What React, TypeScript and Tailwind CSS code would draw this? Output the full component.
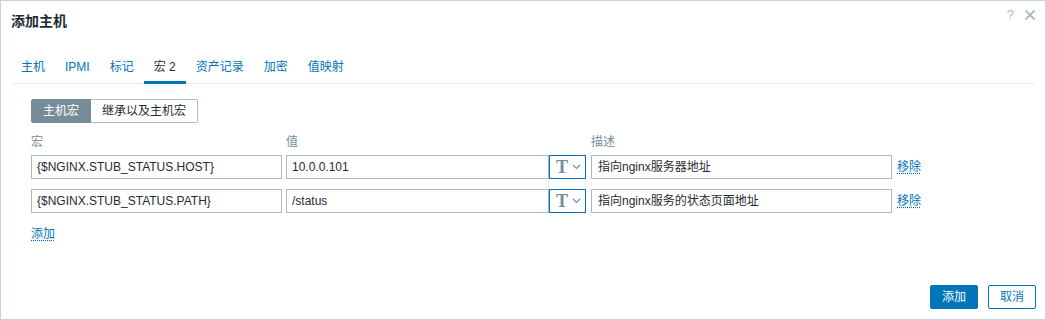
const tabs = ["主机", "IPMI", "标记", "宏 2", "资产记录", "加密", "值映射"];

const rows = [
  { macro: "{$NGINX.STUB_STATUS.HOST}", value: "10.0.0.101", desc: "指向nginx服务器地址" },
  { macro: "{$NGINX.STUB_STATUS.PATH}", value: "/status", desc: "指向nginx服务的状态页面地址" },
];

export default function App() {
  return (
    <div
      className="w-[1046px] h-[320px] bg-white border border-[#c8d1d6] flex flex-col text-[#1f2c33] text-[12px]"
      style={{ fontFamily: '"Liberation Sans", Arial, "Noto Sans CJK SC", sans-serif' }}
    >
      <div className="flex items-start justify-between pl-[10px] pr-[9px] pt-[12px]">
        <h2 className="text-[14px] leading-[16px] font-bold">添加主机</h2>
        <div className="flex items-center gap-[10px] text-[#acbbc2] -mt-[6px]">
          <span className="text-[13px] leading-[16px]">?</span>
          <svg width="12" height="12" viewBox="0 0 12 12">
            <path d="M1.5 1.5 L10.5 10.5 M10.5 1.5 L1.5 10.5" stroke="#acbbc2" strokeWidth="1.8" />
          </svg>
        </div>
      </div>

      <div className="mt-[20px] mx-[10px] flex border-b border-[#ebeef0]">
        {tabs.map((t) => {
          const active = t === "宏 2";
          return (
            <div
              key={t}
              className={
                active
                  ? "px-[10px] pt-[10px] pb-[6px] leading-[16px] border-b-[3px] border-[#0275b8] -mb-px text-[#1f2c33]"
                  : "px-[10px] pt-[10px] pb-[6px] leading-[16px] border-b-[3px] border-transparent -mb-px text-[#0275b8]"
              }
            >
              {t}
            </div>
          );
        })}
      </div>

      <div className="pl-[30px] pt-[15px] flex flex-col">
        <div className="flex">
          <div className="h-[24px] px-[11px] flex items-center bg-[#768d99] border border-[#768d99] text-white rounded-l-[2px]">
            主机宏
          </div>
          <div className="h-[24px] px-[11px] flex items-center bg-white border border-l-0 border-[#acbbc2] rounded-r-[2px]">
            继承以及主机宏
          </div>
        </div>

        <div className="flex mt-[12px] text-[#768d99] leading-[14px]">
          <div className="w-[255px]">宏</div>
          <div className="w-[305px]">值</div>
          <div>描述</div>
        </div>

        <div className="flex flex-col gap-[10px] mt-[6px]">
          {rows.map((r) => (
            <div key={r.macro} className="flex items-center">
              <div className="w-[251px] h-[24px] border border-[#acbbc2] px-[5px] flex items-center">{r.macro}</div>
              <div className="ml-[4px] flex">
                <div className="w-[263px] h-[24px] border border-[#acbbc2] px-[5px] flex items-center">{r.value}</div>
                <div className="w-[37px] h-[24px] border border-[#0275b8] flex items-center pl-[6px] gap-[4px]">
                  <span
                    className="text-[18px] leading-[18px] text-[#768d99] font-bold"
                    style={{ fontFamily: '"Liberation Serif", "Times New Roman", serif' }}
                  >
                    T
                  </span>
                  <svg width="9" height="6" viewBox="0 0 9 6">
                    <path d="M1 1 L4.5 4.5 L8 1" stroke="#768d99" strokeWidth="1.2" fill="none" />
                  </svg>
                </div>
              </div>
              <div className="ml-[5px] w-[301px] h-[24px] border border-[#acbbc2] px-[6px] flex items-center">{r.desc}</div>
              <a className="ml-[5px] text-[#0275b8] underline decoration-dotted underline-offset-2">移除</a>
            </div>
          ))}
        </div>

        <a className="mt-[14px] w-fit text-[#0275b8] underline decoration-dotted underline-offset-2 leading-[14px]">添加</a>
      </div>

      <div className="mt-auto flex justify-end gap-[10px] pr-[9px] pb-[10px]">
        <button className="w-[48px] h-[24px] bg-[#0275b8] text-white rounded-[2px] border border-[#0275b8]">添加</button>
        <button className="w-[48px] h-[24px] bg-white text-[#0275b8] rounded-[2px] border border-[#0275b8]">取消</button>
      </div>
    </div>
  );
}
